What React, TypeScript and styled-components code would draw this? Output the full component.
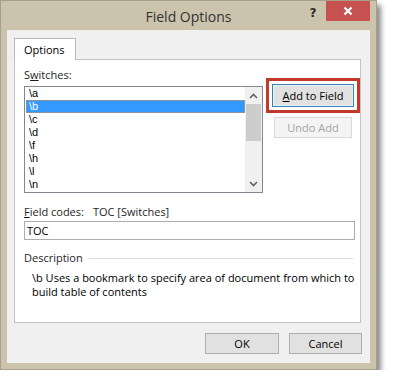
import React from 'react';
import styled, { createGlobalStyle } from 'styled-components';

const GlobalStyle = createGlobalStyle`
  body {
    margin: 0;
    background: #ffffff;
    font-family: "Open Sans", "Noto Sans", sans-serif;
  }
`;

const Window = styled.div`
  width: 377px;
  height: 370px;
  box-sizing: border-box;
  background: #cbc3ac;
  border: 1px solid #a89f88;
  padding: 0 6px 6px;
  display: flex;
  flex-direction: column;
  box-shadow: 4px 5px 5px rgba(0, 0, 0, 0.45);
`;

const TitleBar = styled.div`
  height: 29px;
  flex: none;
  display: grid;
  grid-template-columns: 1fr auto 1fr;
`;

const Title = styled.div`
  grid-column: 2;
  align-self: center;
  font-size: 14px;
  color: #333333;
  padding-top: 1px;
`;

const Controls = styled.div`
  grid-column: 3;
  justify-self: end;
  align-self: start;
  display: flex;
  align-items: flex-start;
`;

const HelpButton = styled.div`
  width: 26px;
  height: 24px;
  display: flex;
  align-items: center;
  justify-content: center;
  font-family: "DejaVu Sans", sans-serif;
  font-weight: bold;
  font-size: 12px;
  color: #2a2a2a;
`;

const CloseButton = styled.div`
  width: 44px;
  height: 20px;
  background: #c75050;
  display: flex;
  align-items: center;
  justify-content: center;
`;

const Client = styled.div`
  flex: 1;
  background: #f0f0f0;
  padding: 8px 9px 0 7px;
  display: flex;
  flex-direction: column;
`;

const TabStrip = styled.div`
  display: flex;
  position: relative;
  z-index: 1;
  margin-bottom: -1px;
`;

const Tab = styled.div`
  width: 62px;
  height: 22px;
  box-sizing: border-box;
  background: #ffffff;
  border: 1px solid #b9b9b9;
  border-bottom: none;
  padding-left: 9px;
  font-size: 11px;
  line-height: 21px;
  color: #000000;
`;

const Panel = styled.div`
  height: 264px;
  box-sizing: border-box;
  background: #ffffff;
  border: 1px solid #c3c3c3;
  padding: 8px 0 0 9px;
  display: flex;
  flex-direction: column;
`;

const Label = styled.div`
  font-size: 11px;
  line-height: 14px;
  color: #1e1e1e;
`;

const Key = styled.span`
  text-decoration: underline;
`;

const SwitchRow = styled.div`
  display: flex;
  align-items: flex-start;
  gap: 3px;
`;

const ListColumn = styled.div`
  width: 240px;
  display: flex;
  flex-direction: column;
  gap: 4px;
`;

const ListBox = styled.div`
  height: 107px;
  box-sizing: border-box;
  border: 1px solid #828790;
  display: flex;
`;

const Items = styled.div`
  flex: 1;
  padding-left: 1px;
`;

const Item = styled.div<{ $selected?: boolean }>`
  height: 13px;
  padding-left: 3px;
  font-family: "Liberation Sans", Arial, sans-serif;
  font-size: 11px;
  line-height: 13px;
  color: ${(p) => (p.$selected ? '#ffffff' : '#000000')};
  background: ${(p) => (p.$selected ? '#3399ff' : 'transparent')};
  outline: ${(p) => (p.$selected ? '1px dotted #e0904a' : 'none')};
  outline-offset: -1px;
`;

const ScrollBar = styled.div`
  width: 17px;
  background: #f0f0f0;
  display: flex;
  flex-direction: column;
`;

const Arrow = styled.div`
  height: 17px;
  display: flex;
  align-items: center;
  justify-content: center;
`;

const Thumb = styled.div`
  height: 37px;
  margin: 0 1px;
  background: #cdcdcd;
`;

const Track = styled.div`
  flex: 1;
`;

const ButtonColumn = styled.div`
  margin-top: 10px;
  display: flex;
  flex-direction: column;
  gap: 4px;
`;

const Highlight = styled.div`
  width: 94px;
  box-sizing: border-box;
  border: 3px solid #c0392b;
  padding: 3px;
`;

const Button = styled.div<{ $focused?: boolean; $disabled?: boolean; $width?: number }>`
  width: ${(p) => p.$width ?? 74}px;
  height: ${(p) => (p.$focused ? 23 : 21)}px;
  box-sizing: border-box;
  display: flex;
  align-items: center;
  justify-content: center;
  font-size: 11px;
  color: ${(p) => (p.$disabled ? '#a3a3a3' : '#000000')};
  background: ${(p) => (p.$disabled ? '#f4f4f4' : '#e1e1e1')};
  border: 1px solid ${(p) => (p.$focused ? '#3c7fb1' : p.$disabled ? '#d9d9d9' : '#adadad')};
  box-shadow: ${(p) => (p.$focused ? 'inset 0 0 0 1px #e5f1fb' : 'none')};
`;

const UndoSlot = styled.div`
  padding-left: 8px;
`;

const FieldLabel = styled(Label)`
  margin-top: 12px;
  display: flex;
  gap: 9px;
`;

const Input = styled.div`
  width: 331px;
  height: 19px;
  box-sizing: border-box;
  margin-top: 2px;
  border: 1px solid #abadb3;
  padding-left: 2px;
  font-size: 11px;
  line-height: 17px;
  color: #000000;
`;

const GroupHeader = styled.div`
  margin-top: 11px;
  width: 329px;
  display: flex;
  align-items: center;
  gap: 5px;
`;

const Rule = styled.div`
  flex: 1;
  border-top: 1px solid #dcdcdc;
`;

const Description = styled.div`
  margin: 6px 0 0 8px;
  font-size: 11px;
  line-height: 14px;
  color: #000000;
  white-space: nowrap;
`;

const Footer = styled.div`
  margin: 10px -1px 0 0;
  display: flex;
  justify-content: flex-end;
  gap: 10px;
`;

const Chevron: React.FC<{ up?: boolean }> = ({ up }) => (
  <svg width="9" height="6" viewBox="0 0 9 6">
    <path
      d={up ? 'M1 5 L4.5 1.5 L8 5' : 'M1 1 L4.5 4.5 L8 1'}
      fill="none"
      stroke="#606060"
      strokeWidth="1.6"
    />
  </svg>
);

const switches = ['\\a', '\\b', '\\c', '\\d', '\\f', '\\h', '\\l', '\\n'];

const App: React.FC = () => {
  return (
    <>
      <GlobalStyle />
      <Window>
        <TitleBar>
          <Title>Field Options</Title>
          <Controls>
            <HelpButton>?</HelpButton>
            <CloseButton>
              <svg width="10" height="10" viewBox="0 0 10 10">
                <path d="M1.5 1.5 L8.5 8.5 M8.5 1.5 L1.5 8.5" stroke="#ffffff" strokeWidth="2.2" />
              </svg>
            </CloseButton>
          </Controls>
        </TitleBar>
        <Client>
          <TabStrip>
            <Tab>Options</Tab>
          </TabStrip>
          <Panel>
            <SwitchRow>
              <ListColumn>
                <Label>
                  S<Key>w</Key>itches:
                </Label>
                <ListBox>
                  <Items>
                    {switches.map((s) => (
                      <Item key={s} $selected={s === '\\b'}>
                        {s}
                      </Item>
                    ))}
                  </Items>
                  <ScrollBar>
                    <Arrow>
                      <Chevron up />
                    </Arrow>
                    <Thumb />
                    <Track />
                    <Arrow>
                      <Chevron />
                    </Arrow>
                  </ScrollBar>
                </ListBox>
              </ListColumn>
              <ButtonColumn>
                <Highlight>
                  <Button $focused $width={82}>
                    <Key>A</Key>dd to Field
                  </Button>
                </Highlight>
                <UndoSlot>
                  <Button $disabled $width={78}>
                    Undo Add
                  </Button>
                </UndoSlot>
              </ButtonColumn>
            </SwitchRow>
            <FieldLabel>
              <span>
                <Key>F</Key>ield codes:
              </span>
              <span>TOC [Switches]</span>
            </FieldLabel>
            <Input>TOC</Input>
            <GroupHeader>
              <Label>Description</Label>
              <Rule />
            </GroupHeader>
            <Description>
              \b Uses a bookmark to specify area of document from which to
              <br />
              build table of contents
            </Description>
          </Panel>
          <Footer>
            <Button>OK</Button>
            <Button $width={73}>Cancel</Button>
          </Footer>
        </Client>
      </Window>
    </>
  );
};

export default App;
